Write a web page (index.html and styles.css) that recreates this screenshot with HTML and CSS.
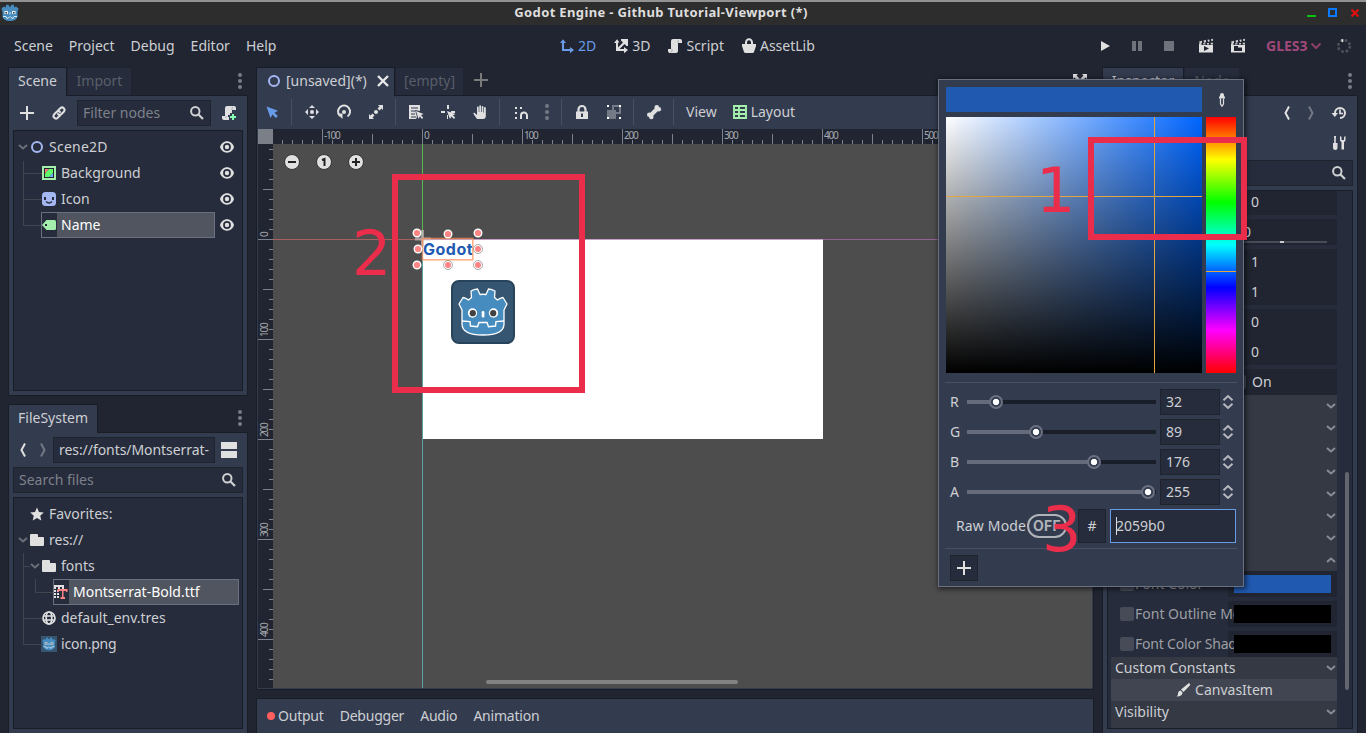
FILE: index.html
```html
<!DOCTYPE html>
<html lang="en">
<head>
<meta charset="utf-8">
<title>Godot Engine - Github Tutorial-Viewport (*)</title>
<link rel="stylesheet" href="styles.css">
</head>
<body>
<svg class="defs" aria-hidden="true">
  <symbol id="head" viewBox="0 0 64 64">
    <path d="M11 30 8 24 12 17.500Q15 18 17.500 20L20.500 17.500 20 11Q23 9.200 26.500 9L29 14.500Q32 14 35 14.500L37.500 9Q41 9.200 44 11L43.500 17.500 46.500 20Q49 18 52 17.500L56 24 53 30V44Q53 55 32 55T11 44Z" fill="#478cbf" stroke="#fff" stroke-width="1.300" stroke-linejoin="round"/>
    <path d="M11 41 19 41.600 19.500 46 26.500 46.800 28 42.500H36L37.500 46.800 44.500 46 45 41.600 53 41" fill="none" stroke="#fff" stroke-width="1.400"/>
    <circle cx="21.500" cy="33" r="4.700" fill="#fff"/><circle cx="42.500" cy="33" r="4.700" fill="#fff"/>
    <circle cx="21.800" cy="33.200" r="3.100" fill="#414042"/><circle cx="42.200" cy="33.200" r="3.100" fill="#414042"/>
    <rect x="30.700" y="31" width="2.700" height="6.500" rx="1.200" fill="#fff"/>
  </symbol>
  <symbol id="mini" viewBox="0 0 18 18">
    <path d="M1 4 3 2.500 5 3.500V1L7.500 .500 8 2.500H10L10.500 .500 13 1V3.500L15 2.500 17.500 4.500 16.500 8V13Q15 17 9 17T1.500 13V8L.500 5Z" fill="#478cbf"/>
    <path d="M2 12.500H5L6 14.500 8 13.500 9 12.500 10 13.500 12 14.500 13 12.500H16M9 8V10.500" stroke="#dbe8f2" fill="none"/>
    <rect x="3.500" y="7" width="3.500" height="3" fill="#e8eef2"/><rect x="11" y="7" width="3.500" height="3" fill="#e8eef2"/>
    <rect x="4.500" y="8" width="1.500" height="1.500" fill="#333"/><rect x="12" y="8" width="1.500" height="1.500" fill="#333"/>
  </symbol>
  <symbol id="plus" viewBox="0 0 16 16"><path d="M7 1H9V7H15V9H9V15H7V9H1V7H7Z" fill="currentColor"/></symbol>
  <symbol id="link" viewBox="0 0 16 16"><g fill="none" stroke="currentColor" stroke-width="2" stroke-linecap="round"><path d="M7 5.500 9.500 3A2.500 2.500 0 0 1 13 6.500L10.500 9A2.500 2.500 0 0 1 7 9"/><path d="M9 10.500 6.500 13A2.500 2.500 0 0 1 3 9.500L5.500 7A2.500 2.500 0 0 1 9 7"/></g></symbol>
  <symbol id="search" viewBox="0 0 16 16"><circle cx="6.300" cy="6.300" r="4.200" fill="none" stroke="currentColor" stroke-width="2"/><path d="M9.500 9.500 14 14" stroke="currentColor" stroke-width="2.200"/></symbol>
  <symbol id="script" viewBox="0 0 16 16"><path d="M6 1Q4 1 4 3V11H1V13Q1 15 3 15H9Q11 15 11 13V5H15V3Q15 1 13 1Z" fill="currentColor"/><path d="M11 5V3.500Q11 2 12 2M5 11V13Q5 14 4 14" fill="none" stroke="#999ca3" stroke-width=".8"/></symbol>
  <symbol id="scriptadd" viewBox="0 0 16 16"><path d="M6 1Q4 1 4 3V11H1V13Q1 15 3 15H8V12H7V10H9V8H11V5H15V3Q15 1 13 1Z" fill="currentColor"/><path d="M11 5V3.500Q11 2 12 2M5 11V13" fill="none" stroke="#999ca3" stroke-width=".8"/><path d="M11 9H13V11H15V13H13V15H11V13H9V11H11Z" fill="#84ffb1"/></symbol>
  <symbol id="eye" viewBox="0 0 16 16"><path d="M8 2.300C4.500 2.300 2 4.800 1 8 2 11.200 4.500 13.700 8 13.700S14 11.200 15 8C14 4.800 11.500 2.300 8 2.300Z" fill="currentColor"/><circle cx="8" cy="8" r="3.900" fill="#262c3b"/><circle cx="8" cy="8" r="2.200" fill="currentColor"/></symbol>
  <symbol id="down" viewBox="0 0 16 16"><path d="M4 6 8 9.500 12 6" fill="none" stroke="currentColor" stroke-width="2"/></symbol>
  <symbol id="up" viewBox="0 0 16 16"><path d="M4 10 8 6.500 12 10" fill="none" stroke="currentColor" stroke-width="2"/></symbol>
  <symbol id="node2d" viewBox="0 0 16 16"><circle cx="8" cy="8" r="5" fill="none" stroke="#a5b7f3" stroke-width="2"/></symbol>
  <symbol id="texrect" viewBox="0 0 16 16"><path d="M1 1H15V15H1Z" fill="#a5efac"/><path d="M3 3H13V13H3Z" fill="#20252f"/><path d="M4 4H8L4 9Z" fill="#ff7a7a"/><path d="M8 4H12V8L8 12H4V9Z" fill="#5fff6a"/><path d="M12 8V12H8Z" fill="#6ab2ff"/></symbol>
  <symbol id="sprite" viewBox="0 0 16 16"><rect x="1" y="1" width="14" height="14" rx="3.500" fill="#a5b7f3"/><path d="M3 6H5V9H3ZM11 6H13V9H11Z" fill="#262c3b"/><path d="M5 10.500Q8 13.500 11 10.500" fill="none" stroke="#262c3b" stroke-width="1.500"/></symbol>
  <symbol id="label" viewBox="0 0 16 16"><path d="M5.500 3 1 8 5.500 13H13.500Q15 13 15 11.500V4.500Q15 3 13.500 3Z" fill="#a5efac"/><rect x="4" y="7" width="2" height="2" fill="#262c3b"/></symbol>
  <symbol id="dots" viewBox="0 0 16 16"><circle cx="8" cy="2" r="2" fill="currentColor"/><circle cx="8" cy="8" r="2" fill="currentColor"/><circle cx="8" cy="14" r="2" fill="currentColor"/></symbol>
  <symbol id="back" viewBox="0 0 16 16"><path d="M10 1.500 6.500 8 10 14.500" fill="none" stroke="currentColor" stroke-width="2"/></symbol>
  <symbol id="fwd" viewBox="0 0 16 16"><path d="M6 1.500 9.500 8 6 14.500" fill="none" stroke="currentColor" stroke-width="2"/></symbol>
  <symbol id="split" viewBox="0 0 16 16"><path d="M0 0H16V7H0ZM0 9H16V16H0Z" fill="currentColor"/></symbol>
  <symbol id="star" viewBox="0 0 16 16"><path d="M8 1.500 10 6 14.800 6.500 11.200 9.700 12.300 14.500 8 12 3.700 14.500 4.800 9.700 1.200 6.500 6 6Z" fill="currentColor"/></symbol>
  <symbol id="folder" viewBox="0 0 16 16"><path d="M2 2Q1 2 1 3V13Q1 14 2 14H14Q15 14 15 13V6Q15 5 14 5H9V3Q9 2 8 2Z" fill="currentColor"/></symbol>
  <symbol id="font" viewBox="0 0 16 16"><path d="M1 1H11V5H9V3H7V5H5V3H3V5H1ZM1 6H3V8H1ZM4 6V8H6V6ZM1 9H3V11H1ZM4 9H6V11H4ZM1 12H3V14H1ZM4 12H6V14H4Z" fill="#e0e0e0"/><path d="M4.500 5H14.500V8H13V7H10.500V13H12V15H7.500V13H9V7H6V8H4.500Z" fill="#ff8484"/></symbol>
  <symbol id="globe" viewBox="0 0 16 16"><g fill="none" stroke="currentColor" stroke-width="1.700"><circle cx="8" cy="8" r="6"/><ellipse cx="8" cy="8" rx="2.800" ry="6"/><path d="M2 6H14M2 10H14"/></g></symbol>
  <symbol id="t2d" viewBox="0 0 16 16"><path d="M3 12V5H1L4 1.300 7 5H5V11H11V9L15 12 11 15.300V13H3Z" fill="currentColor"/></symbol>
  <symbol id="t3d" viewBox="0 0 16 16"><path d="M3 13V5H1L4 1.300 6.500 4.500H5V9.500L10 4.500 8 2.500V1H15V8H13.500L11.500 6 6.500 11H11V9L15 12 11 15.300V13Z" fill="currentColor"/></symbol>
  <symbol id="asset" viewBox="0 0 16 16"><path d="M5 6V4.500A3 3.300 0 0 1 11 4.500V6" fill="none" stroke="currentColor" stroke-width="2"/><path d="M1 6H15V8L13 14Q12.600 15 11.500 15H4.500Q3.400 15 3 14L1 8Z" fill="currentColor"/></symbol>
  <symbol id="clap" viewBox="0 0 16 16"><path d="M1 7V14.500H15V7Z" fill="currentColor"/><path d="M1 3.500 4 2.800V5L2 5.400ZM5.500 2.500 8 2V4.300L6 4.700ZM9.500 1.800 11.500 1.500V3.600L10 4ZM13 1.200 15 .800V2.800L13.500 3.200ZM1 5.200H3.500V7H1ZM5 5.200H7.500V6.500H5ZM9 5H11V6.500H9ZM12.700 4.800H15V6.500H12.700Z" fill="currentColor" opacity=".9"/></symbol>
  <symbol id="select" viewBox="0 0 16 16"><path d="M2.500 2.500 6.500 14 8.500 10.500 12 14 13.800 12 10.500 8.700 14 6.800Z" fill="currentColor"/></symbol>
  <symbol id="move" viewBox="0 0 16 16"><path d="M8 1 11 4H5ZM8 15 5 12H11ZM1 8 4 5V11ZM15 8 12 11V5Z" fill="currentColor"/><circle cx="8" cy="8" r="2" fill="currentColor"/></symbol>
  <symbol id="rotate" viewBox="0 0 16 16"><path d="M4 12A6 6 0 1 1 11.500 12.500" fill="none" stroke="currentColor" stroke-width="2"/><path d="M1 9.500H6.500V15Z" fill="currentColor"/><circle cx="8" cy="8" r="2" fill="currentColor"/></symbol>
  <symbol id="scale" viewBox="0 0 16 16"><path d="M10 1H15V6L13.500 4.500 11.500 6.500 9.500 4.500 11.500 2.500ZM1 10 2.500 11.500 4.500 9.500 6.500 11.500 4.500 13.500 6 15H1Z" fill="currentColor"/><circle cx="8" cy="8" r="2" fill="currentColor"/></symbol>
  <symbol id="list" viewBox="0 0 16 16"><path d="M1 1H12V7L7 6 9 13 8 15H1Z" fill="currentColor"/><path d="M3 4H10M3 7H7M3 10H7M3 13H8" stroke="#333b4f"/><path d="M8 7 10.500 15 11.800 12.500 14 15 15.200 13.700 13 11.300 15.500 10Z" fill="currentColor"/></symbol>
  <symbol id="pivot" viewBox="0 0 16 16"><path d="M7 1H9V5H7ZM1 7H5V9H1ZM11 7H15V9H11ZM7 11H8V15H7Z" fill="currentColor"/><path d="M7 7 10 15 11.500 12.500 14 15 15.200 13.700 13 11.300 15.500 10Z" fill="currentColor"/></symbol>
  <symbol id="hand" viewBox="0 0 16 16"><path d="M5 15 1.500 10Q1 8.500 2.500 8.800L5 11V3A.9.9 0 0 1 6.700 3V8H7.300V1.800A.9.9 0 0 1 9 1.800V8H9.700V2.500A.9.9 0 0 1 11.400 2.500V8.500H12V4A.9.9 0 0 1 13.800 4V12Q13.800 15 11 15Z" fill="currentColor"/></symbol>
  <symbol id="snap" viewBox="0 0 16 16"><path d="M2 3H4V5H2ZM7 3H9V5H7ZM2 8H4V10H2ZM2 13H4V15H2Z" fill="currentColor"/><path d="M8 15V11.500A3 3 0 0 1 14 11.500V15" fill="none" stroke="currentColor" stroke-width="2"/></symbol>
  <symbol id="lock" viewBox="0 0 16 16"><path d="M4.500 8V5.500A3.500 3.500 0 0 1 11.500 5.500V8" fill="none" stroke="currentColor" stroke-width="2.200"/><path d="M2 7.500H14V15H2Z" fill="currentColor"/><path d="M7 9.500H9V13H7Z" fill="#333b4f"/></symbol>
  <symbol id="group" viewBox="0 0 16 16"><path d="M1 6H6V1H15V10H10V15H1Z" fill="#757a87"/><path d="M8 3H13V8H10V6H8Z" fill="#333b4f"/><path d="M1 1H3V3H1ZM13 1H15V3H13ZM1 13H3V15H1ZM13 13H15V15H13Z" fill="#fff"/></symbol>
  <symbol id="bone" viewBox="0 0 16 16"><path d="M4 12 12 4" stroke="currentColor" stroke-width="4"/><g fill="currentColor"><circle cx="3.300" cy="10.800" r="2.300"/><circle cx="5.300" cy="12.900" r="2.300"/><circle cx="10.800" cy="3.200" r="2.300"/><circle cx="12.800" cy="5.200" r="2.300"/></g></symbol>
  <symbol id="grid" viewBox="0 0 16 16"><path d="M2 2H14V14H2ZM2 6H14M7 2V14M2 10H14" fill="none" stroke="#a5efac" stroke-width="1.900"/></symbol>
  <symbol id="expand" viewBox="0 0 16 16"><path d="M1 1H6L4.500 2.500 8 6 11.500 2.500 10 1H15V6L13.500 4.500 9 9H7L2.500 4.500 1 6Z" fill="currentColor"/></symbol>
  <symbol id="history" viewBox="0 0 16 16"><path d="M4 8A5 5 0 1 1 9 13" fill="none" stroke="currentColor" stroke-width="2"/><path d="M.500 8H7L3.800 12Z" fill="currentColor"/><path d="M9 4.500V8.500H12" fill="none" stroke="currentColor" stroke-width="1.700"/></symbol>
  <symbol id="tools" viewBox="0 0 16 16"><path d="M4 1V8M3 2H5" stroke="currentColor" stroke-width="1.600"/><path d="M2 8H6.500V13Q6.500 15 4.300 15T2 13Z" fill="currentColor"/><path d="M9 1V5Q9 6.500 10.500 7V14.500H13V7Q14.500 6.500 14.500 5V1L13 2V5H10.500V2Z" fill="currentColor"/></symbol>
  <symbol id="brush" viewBox="0 0 16 16"><path d="M14 1Q16 2 14.800 3.500L8.500 10 6 7.500Z" fill="currentColor"/><path d="M5.500 8.500 7.500 10.500Q7.500 14.500 1.500 14.500 3.500 13 3 11 3.500 8.500 5.500 8.500Z" fill="currentColor"/></symbol>
  <symbol id="picker" viewBox="0 0 16 16"><path d="M8 1Q10 1 10 3V4.500H11V6.500H5V4.500H6V3Q6 1 8 1Z" fill="currentColor"/><path d="M6.500 6.500V12L8 14.200 9.500 12V6.500" fill="none" stroke="currentColor" stroke-width="1.200"/></symbol>
  <symbol id="spin" viewBox="0 0 16 16"><path d="M3.500 6.300 8 2 12.500 6.300M3.500 9.700 8 14 12.500 9.700" fill="none" stroke="currentColor" stroke-width="1.900"/></symbol>
</svg>

<header class="titlebar">
  <svg class="app-icon"><use href="#mini"/></svg>
  <span class="title">Godot Engine - Github Tutorial-Viewport (*)</span>
  <span class="wm"><i class="wm-min"></i><i class="wm-max"></i><svg class="wm-close" viewBox="0 0 8 8"><path d="M.500 .500 7.500 7.500M7.500 .500 .500 7.500" stroke="#e01010" stroke-width="2.200"/></svg></span>
</header>

<nav class="menubar">
  <div class="menus"><span>Scene</span><span>Project</span><span>Debug</span><span>Editor</span><span>Help</span></div>
  <div class="modes">
    <span class="mode on"><svg class="ic"><use href="#t2d"/></svg>2D</span>
    <span class="mode"><svg class="ic"><use href="#t3d"/></svg>3D</span>
    <span class="mode"><svg class="ic"><use href="#script"/></svg>Script</span>
    <span class="mode"><svg class="ic"><use href="#asset"/></svg>AssetLib</span>
  </div>
  <div class="play">
    <svg class="ic" viewBox="0 0 16 16"><path d="M4 3V13L13 8Z" fill="#e0e0e0"/></svg>
    <svg class="ic" viewBox="0 0 16 16"><path d="M3 3H7V13H3ZM9 3H13V13H9Z" fill="#6f737b"/></svg>
    <svg class="ic" viewBox="0 0 16 16"><path d="M3 3H13V13H3Z" fill="#6f737b"/></svg>
    <svg class="ic scene-play" viewBox="0 0 16 16"><use href="#clap"/><path d="M6 8V13L11 10.500Z" fill="#202531"/></svg>
    <svg class="ic" viewBox="0 0 16 16"><use href="#clap"/><path d="M4 8H8V9.500H12V13H4Z" fill="#202531"/></svg>
  </div>
  <span class="gles">GLES3<svg class="ic" viewBox="0 0 16 16"><path d="M3.500 5.500 8 10 12.500 5.500" fill="none" stroke="#8f4068" stroke-width="2"/></svg></span>
  <svg class="ic spinner" viewBox="0 0 16 16"><circle cx="8" cy="8" r="5.800" fill="none" stroke="#4d525c" stroke-width="2.600" stroke-dasharray="2.600 1.955"/><path d="M5 1.500 7.300 1V4L6 4.300Z" fill="#e0e0e0"/></svg>
</nav>

<main class="workspace">
  <aside class="left">
    <section class="dock scene-dock">
      <div class="tabs"><span class="tab active w-scene">Scene</span><span class="tab w-import">Import</span><svg class="ic dots"><use href="#dots"/></svg></div>
      <div class="panel">
        <div class="tools">
          <svg class="ic a"><use href="#plus"/></svg><svg class="ic b"><use href="#link"/></svg>
          <div class="field filter"><span>Filter nodes</span><svg class="ic"><use href="#search"/></svg></div>
          <svg class="ic"><use href="#scriptadd"/></svg>
        </div>
        <div class="tree">
          <svg class="guides" viewBox="0 0 60 110"><path d="M9.500 30V94.500H28M9.500 42.500H28M9.500 68.500H28" fill="none" stroke="#40454f"/></svg>
          <div class="row d0"><svg class="arrow"><use href="#down"/></svg><svg class="ic"><use href="#node2d"/></svg><span class="wide">Scene2D</span><svg class="ic eye"><use href="#eye"/></svg></div>
          <div class="row d1"><svg class="ic"><use href="#texrect"/></svg><span>Background</span><svg class="ic eye"><use href="#eye"/></svg></div>
          <div class="row d1"><svg class="ic"><use href="#sprite"/></svg><span>Icon</span><svg class="ic eye"><use href="#eye"/></svg></div>
          <div class="row d1"><div class="sel name"><svg class="ic"><use href="#label"/></svg><span>Name</span></div><svg class="ic eye"><use href="#eye"/></svg></div>
        </div>
      </div>
    </section>
    <section class="dock fs-dock">
      <div class="tabs"><span class="tab active w-fs">FileSystem</span><svg class="ic dots"><use href="#dots"/></svg></div>
      <div class="panel">
        <div class="tools fs">
          <svg class="ic"><use href="#back"/></svg><svg class="ic dim"><use href="#fwd"/></svg>
          <div class="field path"><span>res://fonts/Montserrat-</span></div>
          <svg class="ic"><use href="#split"/></svg>
        </div>
        <div class="field search"><span>Search files</span><svg class="ic"><use href="#search"/></svg></div>
        <div class="tree">
          <svg class="guides" viewBox="0 0 60 160"><path d="M9.500 55V146.500H28M9.500 68.500H16M9.500 120.500H28M21.500 81V94.500H39" fill="none" stroke="#40454f"/></svg>
          <div class="row d0"><svg class="ic"><use href="#star"/></svg><span>Favorites:</span></div>
          <div class="row d0"><svg class="arrow"><use href="#down"/></svg><svg class="ic"><use href="#folder"/></svg><span>res://</span></div>
          <div class="row d1"><svg class="arrow in"><use href="#down"/></svg><svg class="ic"><use href="#folder"/></svg><span>fonts</span></div>
          <div class="row d2"><div class="sel font"><svg class="ic"><use href="#font"/></svg><span>Montserrat-Bold.ttf</span></div></div>
          <div class="row d1"><svg class="ic"><use href="#globe"/></svg><span>default_env.tres</span></div>
          <div class="row d1"><svg class="ic png"><use href="#mini"/></svg><span class="tight">icon.png</span></div>
        </div>
      </div>
    </section>
  </aside>

  <section class="center">
    <div class="tabs">
      <span class="tab active w-doc"><svg class="ic"><use href="#node2d"/></svg><span>[unsaved](*)</span><svg class="ic close" viewBox="0 0 16 16"><path d="M3 3 13 13M13 3 3 13" stroke="#e8e8e8" stroke-width="2.400"/></svg></span>
      <span class="tab w-empty">[empty]</span>
      <svg class="ic newtab"><use href="#plus"/></svg>
      <svg class="ic expand"><use href="#expand"/></svg>
    </div>
    <div class="panel viewport">
      <div class="canvas-tools">
        <div class="tg g1"><svg class="ic on"><use href="#select"/></svg></div>
        <div class="tg g2"><svg class="ic"><use href="#move"/></svg><svg class="ic"><use href="#rotate"/></svg><svg class="ic"><use href="#scale"/></svg></div>
        <div class="tg g2"><svg class="ic"><use href="#list"/></svg><svg class="ic"><use href="#pivot"/></svg><svg class="ic"><use href="#hand"/></svg></div>
        <div class="tg g3"><svg class="ic"><use href="#snap"/></svg><svg class="ic dim"><use href="#dots"/></svg></div>
        <div class="tg g4"><svg class="ic"><use href="#lock"/></svg><svg class="ic"><use href="#group"/></svg></div>
        <div class="tg g5"><svg class="ic"><use href="#bone"/></svg></div>
        <span class="view">View</span><svg class="ic"><use href="#grid"/></svg><span class="layout">Layout</span>
      </div>
      <div class="editor">
        <div class="corner"></div>
        <div class="ruler-h"><span>-100</span><span>0</span><span>100</span><span>200</span><span>300</span><span>400</span><span>500</span></div>
        <div class="ruler-v"><span>0</span><span>100</span><span>200</span><span>300</span><span>400</span></div>
        <div class="canvas">
          <div class="page"></div>
          <div class="axis-x neg"></div><div class="axis-x pos"></div><div class="axis-y neg"></div><div class="axis-y pos"></div>
          <svg class="zoomer" viewBox="0 0 80 16"><g fill="#e0e0e0" stroke="#333" stroke-width="1"><circle cx="8" cy="8" r="7.500"/><circle cx="40" cy="8" r="7.500"/><circle cx="72" cy="8" r="7.500"/></g><path d="M4 8H12M68 8H76M72 4V12M38 6 40.500 5V12" fill="none" stroke="#222" stroke-width="2"/></svg>
          <svg class="sprite" viewBox="0 0 64 64"><rect x="1" y="1" width="62" height="62" rx="7" fill="#355570" stroke="#27445c" stroke-width="2"/><use href="#head"/></svg>
          <div class="godot">Godot</div>
          <svg class="handles" viewBox="0 0 80 50">
            <path d="M3 11H19M10.500 2V18" stroke="#cbb9c0" stroke-width="3" opacity=".7"/>
            <rect x="10.500" y="10.500" width="50.300" height="21.300" fill="none" stroke="#ff8f55" stroke-opacity=".7" stroke-width="1.600"/>
            <g fill="#ff8484" stroke="#fff" stroke-width="1.400"><circle cx="5" cy="5" r="3.800"/><circle cx="36" cy="6" r="3.800"/><circle cx="66" cy="5" r="3.800"/><circle cx="6" cy="21" r="3.800"/><circle cx="5" cy="37" r="3.800"/></g>
            <g fill="#ff8484"><circle cx="66" cy="21" r="3"/><circle cx="36" cy="37" r="3"/><circle cx="66" cy="37" r="3"/></g>
            <g fill="none" stroke="#555" stroke-opacity=".5"><circle cx="66" cy="21" r="4.500"/><circle cx="36" cy="37" r="4.500"/><circle cx="66" cy="37" r="4.500"/></g>
          </svg>
          <div class="hscroll"></div>
        </div>
      </div>
    </div>
    <div class="bottom"><i class="reddot"></i><span>Output</span><span>Debugger</span><span>Audio</span><span>Animation</span></div>
  </section>

  <aside class="right">
    <div class="tabs"><span class="tab active w-insp">Inspector</span><span class="tab w-node">Node</span><svg class="ic dots"><use href="#dots"/></svg></div>
    <div class="panel">
      <div class="insp-nav"><svg class="ic"><use href="#back"/></svg><svg class="ic dim"><use href="#fwd"/></svg><svg class="ic hist"><use href="#history"/></svg></div>
      <div class="insp-tools"><svg class="ic"><use href="#tools"/></svg></div>
      <div class="field insp-search"><svg class="ic"><use href="#search"/></svg></div>
      <div class="props">
        <div class="col">
          <div class="val">0</div>
          <div class="val slide">0<i></i></div>
          <div class="pair"><div>1</div><div>1</div></div>
          <div class="pair"><div>0</div><div>0</div></div>
          <div class="val check"><i></i>On</div>
          <div class="sections"><svg><use href="#down"/></svg><svg><use href="#down"/></svg><svg><use href="#down"/></svg><svg><use href="#down"/></svg><svg><use href="#down"/></svg><svg><use href="#down"/></svg><svg><use href="#down"/></svg><svg><use href="#up"/></svg></div>
          <div class="color-row"><i></i><span>Font Color</span><b class="blue"></b></div>
          <div class="color-row"><i></i><span>Font Outline Modulate</span><b></b></div>
          <div class="color-row last"><i></i><span class="tight">Font Color Shadow</span><b></b></div>
          <div class="head">Custom Constants<svg><use href="#down"/></svg></div>
          <div class="cat"><svg class="ic"><use href="#brush"/></svg>CanvasItem</div>
          <div class="head">Visibility<svg><use href="#down"/></svg></div>
          <div class="head">Material</div>
        </div>
        <div class="vscroll"></div>
      </div>
    </div>
  </aside>
</main>

<div class="popup">
  <div class="prev"><div class="swatch"></div><svg class="ic"><use href="#picker"/></svg></div>
  <div class="pick"><div class="sv"><i class="lx"></i><i class="ly"></i></div><div class="hue"><i></i></div></div>
  <hr>
  <div class="sliders">
    <div class="srow"><label>R</label><div class="track"><i style="width:29px"></i></div><div class="field num">32</div><svg class="ic"><use href="#spin"/></svg></div>
    <div class="srow"><label>G</label><div class="track"><i style="width:69px"></i></div><div class="field num">89</div><svg class="ic"><use href="#spin"/></svg></div>
    <div class="srow"><label>B</label><div class="track"><i style="width:127px"></i></div><div class="field num">176</div><svg class="ic"><use href="#spin"/></svg></div>
    <div class="srow"><label>A</label><div class="track"><i style="width:181px"></i></div><div class="field num">255</div><svg class="ic"><use href="#spin"/></svg></div>
  </div>
  <div class="raw"><span>Raw Mode</span><div class="toggle">OFF</div><div class="hash">#</div><div class="hex"><i></i>2059b0</div></div>
  <hr>
  <div class="add"><svg class="ic"><use href="#plus"/></svg></div>
</div>

<div class="mark m1"></div><div class="mark m2"></div>
<div class="digit n1">1</div><div class="digit n2">2</div><div class="digit n3">3</div>
</body>
</html>
```

FILE: styles.css
```css
*, *::after { box-sizing: border-box; }
body { margin: 0; width: 1366px; height: 733px; overflow: hidden; position: relative; background: #202531; color: #cdcfd3; font: 14px/20px "Noto Sans", sans-serif; display: flex; flex-direction: column; white-space: nowrap; }
.defs { position: absolute; width: 0; height: 0; }
svg { display: block; flex: none; }
.ic { width: 16px; height: 16px; color: #e0e0e0; }
.ic.dim { color: #737884; }
.ic.on { color: #699ce8; }

/* window frame */
.titlebar { height: 25px; flex: none; background: #2d2d2d; border-top: 2px solid #929292; display: flex; align-items: center; padding-left: 1px; }
.app-icon { width: 18px; height: 18px; margin-top: -1px; }
.title { width: 296px; margin: -3px 0 0 494px; font-size: 13px; letter-spacing: .36px; font-weight: 700; color: #dedede; text-align: center; }
.wm { margin-left: auto; display: flex; align-items: center; gap: 12px; padding-right: 7px; }
.wm-min { width: 9px; height: 2px; background: #0cc010; margin-top: 4px; }
.wm-max { width: 9px; height: 9px; border: 2px solid #0a7bff; margin-top: -2px; }
.wm-close { width: 8px; height: 8px; margin: -1px 0 0 2px; }

.menubar { height: 42px; flex: none; display: flex; align-items: center; padding: 0 0 1px 14px; }
.menus { display: flex; gap: 16px; width: 545px; }
.modes { display: flex; gap: 17px; width: 538px; }
.mode { display: flex; align-items: center; gap: 3px; }
.mode.on, .mode.on .ic { color: #699ce8; }
.play { display: flex; gap: 16px; width: 169px; }
.scene-play { margin-left: 5px; }
.gles { display: flex; align-items: center; color: #a1487a; font-weight: 700; width: 70px; }

.workspace { flex: 1; min-height: 0; display: flex; gap: 8px; padding-left: 8px; }
.left { width: 240px; display: flex; flex-direction: column; gap: 8px; }
.tabs { height: 28px; flex: none; display: flex; gap: 1px; position: relative; }
.tab { height: 28px; background: #262c3b; color: #595e69; display: flex; align-items: center; padding-bottom: 1px; justify-content: center; border-top: 1px solid #1e232e; }
.tab.active { background: #333b4f; color: #cdcfd3; border: 1px solid #191d27; border-bottom: 0; height: 29px; z-index: 1; padding-bottom: 2px; }
.dots { margin: 6px 0 0 auto; color: #797d87; }
.panel { background: #333b4f; border: 1px solid #191d27; flex: 1; min-height: 0; display: flex; flex-direction: column; }
.w-scene { width: 59px; } .w-import { width: 63px; } .w-fs { width: 90px; }
.tab.w-doc { width: 139px; gap: 4px; justify-content: flex-start; padding-left: 9px; padding-right: 3px; } .close { margin-left: auto; }
.w-empty { width: 67px; } .w-insp { width: 82px; } .w-node { width: 54px; }
.scene-dock { height: 329px; display: flex; flex-direction: column; }
.fs-dock { flex: 1; display: flex; flex-direction: column; }
.dock .panel { padding: 4px; }
.fs-dock .panel { border-bottom: 0; }
.field { height: 26px; background: #262c3b; border: 1px solid #1e232e; display: flex; align-items: center; justify-content: space-between; padding: 0 5px; color: #7d818b; }
.field .ic { color: #cfd0d3; }
.tools { height: 26px; display: flex; align-items: center; margin-bottom: 4px; flex: none; }
.tools .a { margin: 0 16px 0 6px; }
.tools .b { margin-right: 10px; }
.filter { width: 134px; margin-right: 10px; }
.tools.fs { padding-left: 2px; }
.tools.fs .dim { margin-left: 4px; }
.path { width: 162px; margin: 0 6px 0 2px; color: #cdcfd3; overflow: hidden; letter-spacing: -.06px; }
.search { flex: none; margin-bottom: 4px; }
.tree { flex: 1; border: 1px solid #191d27; background: #262c3b; padding-top: 3px; position: relative; min-height: 0; }
.guides { position: absolute; left: 0; top: 0; width: 60px; }
.scene-dock .guides { height: 110px; } .fs-dock .guides { height: 160px; }
.row { height: 26px; display: flex; align-items: center; position: relative; }
.row span { margin-left: 4px; }
.row .wide { letter-spacing: .25px; }
.tight { letter-spacing: -.2px; }
.d0 { padding-left: 15px; } .d1 { padding-left: 27px; } .d2 { padding-left: 39px; }
.arrow { width: 16px; height: 16px; position: absolute; left: 1px; color: #6a6f7a; }
.arrow.in { left: 13px; }
.eye { margin-left: auto; margin-right: 7px; }
.sel { height: 26px; border: 1px solid #6b7080; background: linear-gradient(90deg, #262c3b 15px, #50555f 15px); display: flex; align-items: center; color: #fff; }
.sel .ic { margin-left: -1px; }
.name { width: 174px; } .font { width: 186px; }
.png { background: #355570; padding: 1px; }

/* central editor */
.center { width: 838px; display: flex; flex-direction: column; }
.newtab { margin: 5px 0 0 9px; color: #797b7b; }
.expand { margin: 6px 6px 0 auto; }
.viewport { height: 595px; flex: none; padding: 0 1px 1px; }
.canvas-tools { height: 33px; flex: none; display: flex; align-items: center; padding-bottom: 1px; }
.tg { height: 26px; display: flex; align-items: center; border-right: 1px solid #4a5061; gap: 16px; padding-left: 12px; }
.g1 { width: 34px; padding-left: 6px; } .g2 { width: 104px; } .g3 { width: 62px; gap: 10px; padding-left: 13px; }
.g4 { width: 72px; } .g5 { width: 40px; }
.view { margin: 0 15px 0 12px; } .layout { margin-left: 3px; }
.editor { flex: 1; display: grid; grid-template: 15px 1fr / 15px 1fr; }
.corner { background: #7b7f88; }
.ruler-h, .ruler-v { background-color: #202531; background-repeat: repeat-x; display: flex; font-size: 10px; letter-spacing: -1.200px; color: #a6a9af; overflow: hidden; }
.ruler-h { background-image: linear-gradient(90deg, #7e828c 1px, transparent 1px), linear-gradient(90deg, #7e828c 1px, transparent 1px), linear-gradient(90deg, #7e828c 1px, transparent 1px); background-size: 100px 15px, 50px 10px, 10px 4px; background-position: 49px 0, 49px 100%, 9px 100%; padding-left: 51px; }
.ruler-h span { width: 100px; line-height: 13px; flex: none; }
.ruler-v { background-image: linear-gradient(#7e828c 1px, transparent 1px), linear-gradient(#7e828c 1px, transparent 1px), linear-gradient(#7e828c 1px, transparent 1px); background-size: 15px 100px, 10px 50px, 4px 10px; background-position: 0 95px, 100% 45px, 100% 5px; background-repeat: repeat-y; flex-direction: column; }
.ruler-v span { height: 100px; flex: none; writing-mode: vertical-rl; transform: rotate(180deg); width: 13px; line-height: 13px; }
.ruler-v span:first-child { height: 93px; }
.canvas { background: #4d4d4d; position: relative; overflow: hidden; }
.page { position: absolute; left: 150px; top: 95px; width: 400px; height: 200px; background: #fff; }
.axis-x, .axis-y { position: absolute; }
.axis-x { height: 1px; top: 95px; } .axis-y { width: 1px; left: 149px; }
.axis-x.neg { left: 0; width: 149px; background: #a85f5f; }
.axis-x.pos { left: 150px; right: 0; background: linear-gradient(90deg, #c69fc8 400px, #93618f 400px); }
.axis-y.neg { top: 0; height: 95px; background: #5bb954; }
.axis-y.pos { top: 95px; bottom: 0; background: #5d9fa3; }
.zoomer { position: absolute; left: 11px; top: 10px; width: 80px; height: 16px; }
.sprite { position: absolute; left: 178px; top: 136px; width: 64px; height: 64px; }
.godot { position: absolute; left: 150px; top: 95px; font: 700 16px/20px Inter, sans-serif; letter-spacing: .5px; color: #2059b0; }
.handles { position: absolute; left: 139px; top: 84px; width: 80px; height: 50px; }
.hscroll { position: absolute; left: 213px; top: 536px; width: 252px; height: 4px; border-radius: 2px; background: #828282; }
.bottom { margin-top: 8px; flex: 1; background: #333b4f; border: 1px solid #191d27; border-bottom: 0; display: flex; gap: 16px; align-items: center; padding-left: 10px; letter-spacing: -.22px; }
.reddot { width: 8px; height: 8px; border-radius: 50%; background: #ff5f5f; margin-right: -13px; }

/* inspector */
.right { width: 256px; display: flex; flex-direction: column; }
.right .panel { padding: 0 4px 4px; border-bottom: 0; }
.insp-nav { height: 34px; flex: none; display: flex; align-items: center; justify-content: flex-end; gap: 8px; padding-right: 6px; }
.insp-nav .hist { margin-left: 4px; }
.insp-tools { height: 26px; margin-bottom: 4px; flex: none; display: flex; align-items: center; justify-content: flex-end; padding-right: 6px; }
.insp-search { flex: none; justify-content: flex-end; margin-bottom: 4px; }
.props { flex: 1; min-height: 0; border: 1px solid #191d27; background: #262c3b; display: flex; padding-left: 3px; overflow: hidden; }
.col { width: 226px; flex: none; }
.val, .pair { margin-left: 117px; background: #202531; padding-left: 23px; margin-bottom: 4px; }
.val { height: 26px; line-height: 26px; }
.val:first-child { height: 24px; line-height: 22px; }
.slide { padding-left: 15px; position: relative; }
.slide i { position: absolute; left: 6px; right: 10px; bottom: 2px; height: 2px; background: linear-gradient(90deg, #484c57 46px, #c8cacd 46px, #c8cacd 50px, #484c57 50px); }
.pair { height: 56px; } .pair div { height: 30px; line-height: 26px; }
.check { display: flex; padding-left: 4px; gap: 6px; margin-bottom: 0; align-items: center; }
.check i, .color-row i { width: 14px; height: 14px; border-radius: 2px; background: #464b57; flex: none; }
.sections { height: 176px; background: #343944; display: flex; flex-direction: column; align-items: flex-end; }
.sections svg, .head svg { width: 16px; height: 22px; color: #898c94; margin-right: -2px; }
.color-row { height: 26px; margin-bottom: 4px; display: flex; align-items: center; padding-left: 9px; gap: 1px; color: #9d9fa4; background: linear-gradient(90deg, transparent 117px, #202531 117px); }
.color-row span { width: 99px; overflow: hidden; }
.color-row b { margin-left: -1px; width: 97px; height: 18px; background: #000; }
.color-row b.blue { background: #2059b0; }
.color-row.last { margin-bottom: 0; }
.head { height: 22px; background: #343944; padding-left: 4px; display: flex; justify-content: space-between; line-height: 21px; }
.cat { height: 22px; background: #414551; display: flex; align-items: center; justify-content: center; gap: 4px; }
.vscroll { width: 4px; height: 218px; margin: 281px 0 0 8px; border-radius: 2px; background: #63666f; }

/* color picker popup */
.popup { position: absolute; z-index: 2; left: 938px; top: 79px; width: 306px; height: 508px; background: #333b4f; border: 1px solid #6b7180; box-shadow: 1px 1px 5px 1px rgba(0,0,0,.6); padding: 7px; }
.prev { display: flex; align-items: center; height: 25px; gap: 12px; margin-bottom: 5px; }
.swatch { width: 256px; height: 25px; background: #2059b0; }
.pick { display: flex; gap: 4px; margin-bottom: 9px; }
.sv { width: 256px; height: 256px; position: relative; background: linear-gradient(to top, #000, transparent), linear-gradient(to right, #fff, #0065ff); }
.sv .lx { position: absolute; left: 208px; top: 0; width: 1px; height: 256px; background: #e2a53f; }
.sv .ly { position: absolute; left: 0; top: 79px; width: 256px; height: 1px; background: #e2a53f; }
.hue { width: 30px; position: relative; background: linear-gradient(#f00, #ff0 16.670%, #0f0 33.330%, #0ff 50%, #00f 66.670%, #f0f 83.330%, #f00); }
.hue i { position: absolute; left: 0; top: 154px; width: 30px; height: 1px; background: #e2a53f; }
.popup hr { border: 0; height: 1px; margin: 0 -1px; background: #4a5061; }
.sliders { margin-top: 6px; display: grid; gap: 4px; }
.srow { height: 26px; display: grid; grid-template-columns: 17px 189px 60px 16px; column-gap: 4px; align-items: center; padding-left: 4px; }
.srow .track { margin-left: -4px; width: 189px; height: 4px; background: #1a1e28; }
.track i { display: block; height: 4px; background: #656b7a; position: relative; }
.track i::after { content: ""; position: absolute; right: -7px; top: -5px; width: 14px; height: 14px; border-radius: 50%; border: 2px solid #6b7180; background: radial-gradient(circle, #fff 2.800px, #333b4f 3.600px); }
.srow .field { width: 60px; margin-left: -4px; color: #cdcfd3; }
.srow .ic { margin-left: -8px; color: #b7b9be; }
.raw { display: flex; align-items: center; height: 34px; margin: 4px 0 5px; padding-left: 10px; }
.raw span { width: 70px; letter-spacing: .15px; }
.toggle { width: 40px; height: 24px; margin-left: 1px; border: 2px solid #b0b3b9; border-radius: 12px; font: 700 14px/20px Inter, sans-serif; letter-spacing: .2px; text-align: center; color: #b0b3b9; }
.hash { width: 28px; height: 34px; margin-left: 11px; background: #262c3b; border: 1px solid #1e232e; text-align: center; line-height: 32px; }
.hex { width: 126px; height: 34px; margin-left: 4px; background: #262c3b; border: 1px solid #699ce8; padding-left: 5px; line-height: 32px; position: relative; }
.hex i { position: absolute; left: 5px; top: 7px; width: 1px; height: 18px; background: #ddd; }
.add { width: 28px; height: 26px; margin: 6px 0 0 4px; background: #262c3b; border: 1px solid #1e232e; display: grid; place-items: center; }

/* annotation overlay */
.mark { position: absolute; z-index: 3; border: 6px solid #e92d4a; }
.m1 { left: 1088px; top: 137px; width: 159px; height: 103px; }
.m2 { left: 392px; top: 174px; width: 193px; height: 219px; }
.digit { position: absolute; z-index: 3; font: 62px/72px "DejaVu Sans", sans-serif; color: #e92d4a; }
.n1 { left: 1036px; top: 155px; } .n2 { left: 352px; top: 218px; } .n3 { left: 1042px; top: 494px; }
```
